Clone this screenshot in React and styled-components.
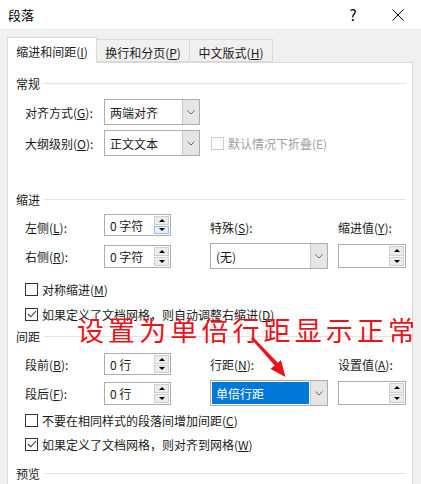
import React from 'react';
import styled, { createGlobalStyle } from 'styled-components';

const GlobalStyle = createGlobalStyle`
  html, body {
    margin: 0;
    padding: 0;
    background: #f0f0f0;
  }
  body {
    font-family: "Noto Sans CJK SC", "Noto Sans", sans-serif;
    font-size: 12px;
    color: #1a1a1a;
  }
`;

const Window = styled.div`
  position: relative;
  width: 421px;
  height: 484px;
  overflow: hidden;
  background: #f0f0f0;
`;

const TitleBar = styled.div`
  height: 29px;
  background: #fff;
  display: flex;
  align-items: center;
  padding-left: 8px;
`;

const Title = styled.div`
  flex: 1;
  font-size: 13px;
  color: #000;
`;

const TitleButton = styled.div`
  width: ${(p) => p.$w || 44}px;
  height: 29px;
  display: flex;
  align-items: center;
  justify-content: center;
  font-size: 15px;
  color: #000;
`;

const Body = styled.div`
  padding: 8px 8px 0 7px;
`;

const Tabs = styled.div`
  display: flex;
  align-items: flex-end;
  height: 25px;
`;

const Tab = styled.div`
  box-sizing: border-box;
  width: ${(p) => p.$w}px;
  height: ${(p) => (p.$active ? 26 : 23)}px;
  margin-bottom: ${(p) => (p.$active ? -1 : 0)}px;
  display: flex;
  align-items: center;
  justify-content: center;
  padding-top: ${(p) => (p.$active ? 1 : 3)}px;
  background: ${(p) => (p.$active ? '#fff' : '#f0f0f0')};
  border: 1px solid #d9d9d9;
  border-bottom: ${(p) => (p.$active ? 'none' : '1px solid #d9d9d9')};
  border-left: ${(p) => (p.$first ? '1px solid #d9d9d9' : 'none')};
  position: relative;
  z-index: ${(p) => (p.$active ? 1 : 0)};
`;

const Panel = styled.div`
  box-sizing: border-box;
  background: #fff;
  border: 1px solid #d9d9d9;
  height: 430px;
  padding: 12px 6px 0 8px;
`;

const GroupHeader = styled.div`
  display: flex;
  align-items: center;
  height: 16px;
  margin-top: ${(p) => p.$top || 0}px;
  &::after {
    content: '';
    flex: 1;
    height: 1px;
    background: #e3e3e3;
    margin-left: 4px;
  }
`;

const GroupBody = styled.div`
  padding-left: 9px;
  margin-top: ${(p) => p.$top || 0}px;
  display: flex;
  flex-direction: column;
  gap: ${(p) => p.$gap || 0}px;
`;

const Row = styled.div`
  display: flex;
  align-items: center;
`;

const Label = styled.div`
  width: ${(p) => p.$w || 79}px;
  white-space: nowrap;
  padding-top: ${(p) => p.$drop || 0}px;
`;

const FieldGrid = styled.div`
  display: grid;
  grid-template-columns: 79px 106px 128px 68px;
  grid-template-rows: 22px 26px;
  row-gap: ${(p) => p.$gap}px;
  align-items: center;
`;

const SelectBox = styled.div`
  box-sizing: border-box;
  width: ${(p) => p.$w}px;
  height: 26px;
  border: 1px solid #adadad;
  background: #fff;
  display: flex;
  align-items: stretch;
`;

const SelectText = styled.div`
  flex: 1;
  display: flex;
  align-items: center;
  padding-left: 4px;
  margin: 1px;
  background: ${(p) => (p.$selected ? '#0078d7' : 'transparent')};
  color: ${(p) => (p.$selected ? '#fff' : '#1a1a1a')};
`;

const SelectButton = styled.div`
  width: 16px;
  background: #e5e5e5;
  border-left: 1px solid #c8c8c8;
  display: flex;
  align-items: center;
  justify-content: center;
`;

const SpinBox = styled.div`
  box-sizing: border-box;
  width: ${(p) => p.$w || 67}px;
  height: ${(p) => p.$h || 22}px;
  border: 1px solid #adadad;
  background: #fff;
  display: flex;
  align-items: stretch;
  padding: 1px;
`;

const SpinText = styled.div`
  flex: 1;
  display: flex;
  align-items: center;
  padding-left: 4px;
`;

const SpinButtons = styled.div`
  width: 15px;
  display: flex;
  flex-direction: column;
  gap: 1px;
`;

const SpinButton = styled.div`
  flex: 1;
  box-sizing: border-box;
  border: 1px solid ${(p) => (p.$hover ? '#8cc0ee' : '#cfcfcf')};
  background: ${(p) => (p.$hover ? '#e5f1fb' : '#ececec')};
  display: flex;
  align-items: center;
  justify-content: center;
  &::after {
    content: '';
    border-left: 3px solid transparent;
    border-right: 3px solid transparent;
    ${(p) => (p.$down ? 'border-top: 3px solid #000;' : 'border-bottom: 3px solid #000;')}
  }
`;

const CheckRow = styled.label`
  display: flex;
  align-items: center;
  height: 20px;
  color: ${(p) => (p.$disabled ? '#a0a0a0' : '#1a1a1a')};
  margin-left: ${(p) => p.$ml || 0}px;
`;

const Box = styled.span`
  box-sizing: border-box;
  width: 13px;
  height: 13px;
  border: 1px solid ${(p) => (p.$disabled ? '#cccccc' : '#333')};
  background: #fff;
  margin-right: 4px;
  display: flex;
  align-items: center;
  justify-content: center;
`;

const Annotation = styled.div`
  position: absolute;
  left: 77px;
  top: 312px;
  font-size: 27px;
  letter-spacing: 4.1px;
  line-height: 36px;
  color: #e8141c;
  white-space: nowrap;
`;

const ArrowLayer = styled.svg`
  position: absolute;
  left: 0;
  top: 0;
  pointer-events: none;
`;

const Chevron = () => (
  <svg width="8" height="5" viewBox="0 0 8 5">
    <path d="M0.5 0.5 L4 4 L7.5 0.5" fill="none" stroke="#666" strokeWidth="1" />
  </svg>
);

const Select = ({ w, children, selected }) => (
  <SelectBox $w={w}>
    <SelectText $selected={selected}>{children}</SelectText>
    <SelectButton>
      <Chevron />
    </SelectButton>
  </SelectBox>
);

const Spinner = ({ value, w, h, hoverDown }) => (
  <SpinBox $w={w} $h={h}>
    <SpinText>{value}</SpinText>
    <SpinButtons>
      <SpinButton />
      <SpinButton $down $hover={hoverDown} />
    </SpinButtons>
  </SpinBox>
);

const Check = ({ checked, disabled, ml, children }) => (
  <CheckRow $disabled={disabled} $ml={ml}>
    <Box $disabled={disabled}>
      {checked && (
        <svg width="10" height="8" viewBox="0 0 10 8">
          <path d="M1 4 L3.8 6.8 L9 1" fill="none" stroke="#333" strokeWidth="1.1" />
        </svg>
      )}
    </Box>
    {children}
  </CheckRow>
);

const App = () => {
  return (
    <Window>
      <GlobalStyle />
      <TitleBar>
        <Title>段落</Title>
        <TitleButton>?</TitleButton>
        <TitleButton $w={46}>
          <svg width="12" height="12" viewBox="0 0 12 12">
            <path d="M0.5 0.5 L11.5 11.5 M11.5 0.5 L0.5 11.5" stroke="#000" strokeWidth="1" />
          </svg>
        </TitleButton>
      </TitleBar>
      <Body>
        <Tabs>
          <Tab $active $first $w={90}>缩进和间距(<u>I</u>)</Tab>
          <Tab $w={93}>换行和分页(<u>P</u>)</Tab>
          <Tab $w={83}>中文版式(<u>H</u>)</Tab>
        </Tabs>
        <Panel>
          <GroupHeader>常规</GroupHeader>
          <GroupBody $top={8} $gap={5}>
            <Row>
              <Label>对齐方式(<u>G</u>):</Label>
              <Select w={96}>两端对齐</Select>
            </Row>
            <Row>
              <Label>大纲级别(<u>O</u>):</Label>
              <Select w={96}>正文文本</Select>
              <Check disabled ml={11}>默认情况下折叠(E)</Check>
            </Row>
          </GroupBody>

          <GroupHeader $top={35}>缩进</GroupHeader>
          <GroupBody $top={7}>
            <FieldGrid $gap={7}>
              <Label $drop={4}>左侧(<u>L</u>):</Label>
              <Spinner value="0 字符" hoverDown />
              <Label $drop={4}>特殊(<u>S</u>):</Label>
              <Label $drop={4}>缩进值(<u>Y</u>):</Label>
              <Label>右侧(<u>R</u>):</Label>
              <Spinner value="0 字符" h={23} />
              <Select w={118}>(无)</Select>
              <Spinner value="" w={68} h={24} />
            </FieldGrid>
          </GroupBody>
          <GroupBody $top={10} $gap={5}>
            <Check>对称缩进(<u>M</u>)</Check>
            <Check checked>如果定义了文档网格，则自动调整右缩进(<u>D</u>)</Check>
          </GroupBody>

          <GroupHeader $top={4}>间距</GroupHeader>
          <GroupBody $top={9}>
            <FieldGrid $gap={5}>
              <Label>段前(<u>B</u>):</Label>
              <Spinner value="0 行" />
              <Label>行距(<u>N</u>):</Label>
              <Label>设置值(<u>A</u>):</Label>
              <Label>段后(<u>F</u>):</Label>
              <Spinner value="0 行" h={23} />
              <Select w={118} selected>单倍行距</Select>
              <Spinner value="" w={68} h={24} />
            </FieldGrid>
          </GroupBody>
          <GroupBody $top={4} $gap={4}>
            <Check>不要在相同样式的段落间增加间距(<u>C</u>)</Check>
            <Check checked>如果定义了文档网格，则对齐到网格(<u>W</u>)</Check>
          </GroupBody>

          <GroupHeader $top={11}>预览</GroupHeader>
        </Panel>
      </Body>
      <Annotation>设置为单倍行距显示正常</Annotation>
      <ArrowLayer width="421" height="484" viewBox="0 0 421 484">
        <polygon
          points="251,338.5 253,337 279,364 276,367"
          fill="#e8141c"
        />
        <polygon points="285.5,377 270.5,369 281,360" fill="#e8141c" />
      </ArrowLayer>
    </Window>
  );
};

export default App;
